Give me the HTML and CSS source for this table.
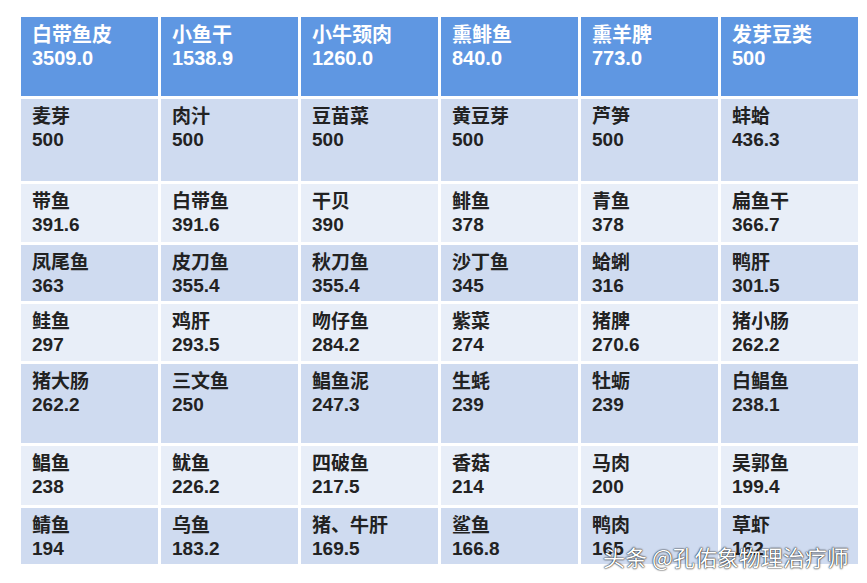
FILE: index.html
```html
<!DOCTYPE html>
<html lang="zh-CN">
<head>
<meta charset="utf-8">
<title>嘌呤含量表</title>
<link rel="stylesheet" href="styles.css">
</head>
<body>
<div class="page">
  <div class="table">
    <div class="cell head"><span>白带鱼皮</span><span>3509.0</span></div>
    <div class="cell head"><span>小鱼干</span><span>1538.9</span></div>
    <div class="cell head"><span>小牛颈肉</span><span>1260.0</span></div>
    <div class="cell head"><span>熏鲱鱼</span><span>840.0</span></div>
    <div class="cell head"><span>熏羊脾</span><span>773.0</span></div>
    <div class="cell head"><span>发芽豆类</span><span>500</span></div>

    <div class="cell dark"><span>麦芽</span><span>500</span></div>
    <div class="cell dark"><span>肉汁</span><span>500</span></div>
    <div class="cell dark"><span>豆苗菜</span><span>500</span></div>
    <div class="cell dark"><span>黄豆芽</span><span>500</span></div>
    <div class="cell dark"><span>芦笋</span><span>500</span></div>
    <div class="cell dark"><span>蚌蛤</span><span>436.3</span></div>

    <div class="cell light"><span>带鱼</span><span>391.6</span></div>
    <div class="cell light"><span>白带鱼</span><span>391.6</span></div>
    <div class="cell light"><span>干贝</span><span>390</span></div>
    <div class="cell light"><span>鲱鱼</span><span>378</span></div>
    <div class="cell light"><span>青鱼</span><span>378</span></div>
    <div class="cell light"><span>扁鱼干</span><span>366.7</span></div>

    <div class="cell dark"><span>凤尾鱼</span><span>363</span></div>
    <div class="cell dark"><span>皮刀鱼</span><span>355.4</span></div>
    <div class="cell dark"><span>秋刀鱼</span><span>355.4</span></div>
    <div class="cell dark"><span>沙丁鱼</span><span>345</span></div>
    <div class="cell dark"><span>蛤蜊</span><span>316</span></div>
    <div class="cell dark"><span>鸭肝</span><span>301.5</span></div>

    <div class="cell light"><span>鲑鱼</span><span>297</span></div>
    <div class="cell light"><span>鸡肝</span><span>293.5</span></div>
    <div class="cell light"><span>吻仔鱼</span><span>284.2</span></div>
    <div class="cell light"><span>紫菜</span><span>274</span></div>
    <div class="cell light"><span>猪脾</span><span>270.6</span></div>
    <div class="cell light"><span>猪小肠</span><span>262.2</span></div>

    <div class="cell dark"><span>猪大肠</span><span>262.2</span></div>
    <div class="cell dark"><span>三文鱼</span><span>250</span></div>
    <div class="cell dark"><span>鲳鱼泥</span><span>247.3</span></div>
    <div class="cell dark"><span>生蚝</span><span>239</span></div>
    <div class="cell dark"><span>牡蛎</span><span>239</span></div>
    <div class="cell dark"><span>白鲳鱼</span><span>238.1</span></div>

    <div class="cell light"><span>鲳鱼</span><span>238</span></div>
    <div class="cell light"><span>鱿鱼</span><span>226.2</span></div>
    <div class="cell light"><span>四破鱼</span><span>217.5</span></div>
    <div class="cell light"><span>香菇</span><span>214</span></div>
    <div class="cell light"><span>马肉</span><span>200</span></div>
    <div class="cell light"><span>吴郭鱼</span><span>199.4</span></div>

    <div class="cell dark"><span>鲭鱼</span><span>194</span></div>
    <div class="cell dark"><span>乌鱼</span><span>183.2</span></div>
    <div class="cell dark"><span>猪、牛肝</span><span>169.5</span></div>
    <div class="cell dark"><span>鲨鱼</span><span>166.8</span></div>
    <div class="cell dark"><span>鸭肉</span><span>165</span></div>
    <div class="cell dark"><span>草虾</span><span>162</span></div>
  </div>
  <div class="watermark">头条 @孔佑象物理治疗师</div>
</div>
</body>
</html>
```

FILE: styles.css
```css
html, body {
  margin: 0;
  padding: 0;
  background: #ffffff;
}

.page {
  position: relative;
  width: 867px;
  height: 583px;
  overflow: hidden;
  padding: 17px 0 0 21px;
  box-sizing: border-box;
}

.table {
  display: grid;
  grid-template-columns: repeat(6, 137px);
  grid-template-rows: 79px 82px 58px 56px 57px 79px 59px 56px;
  column-gap: 3px;
  row-gap: 3px;
  font-family: "Liberation Sans", "Noto Sans CJK SC", sans-serif;
  font-weight: bold;
}

.cell {
  display: flex;
  flex-direction: column;
  padding: 6px 0 0 11px;
  box-sizing: border-box;
  font-size: 19px;
  line-height: 23px;
  color: #222222;
}

.head {
  background: #5f97e2;
  color: #ffffff;
  font-size: 20px;
  padding-top: 7px;
}

.dark {
  background: #cfdbf0;
}

.light {
  background: #e8eef8;
}

.watermark {
  position: absolute;
  left: 603px;
  top: 542px;
  font-family: "Noto Sans CJK SC", "Noto Sans", sans-serif;
  font-size: 22px;
  line-height: 28px;
  color: #ffffff;
  font-weight: normal;
  letter-spacing: 0;
  text-shadow: 0 0 2px rgba(0, 0, 0, 0.9), 0 0 1px rgba(0, 0, 0, 0.9);
  white-space: nowrap;
}
```
